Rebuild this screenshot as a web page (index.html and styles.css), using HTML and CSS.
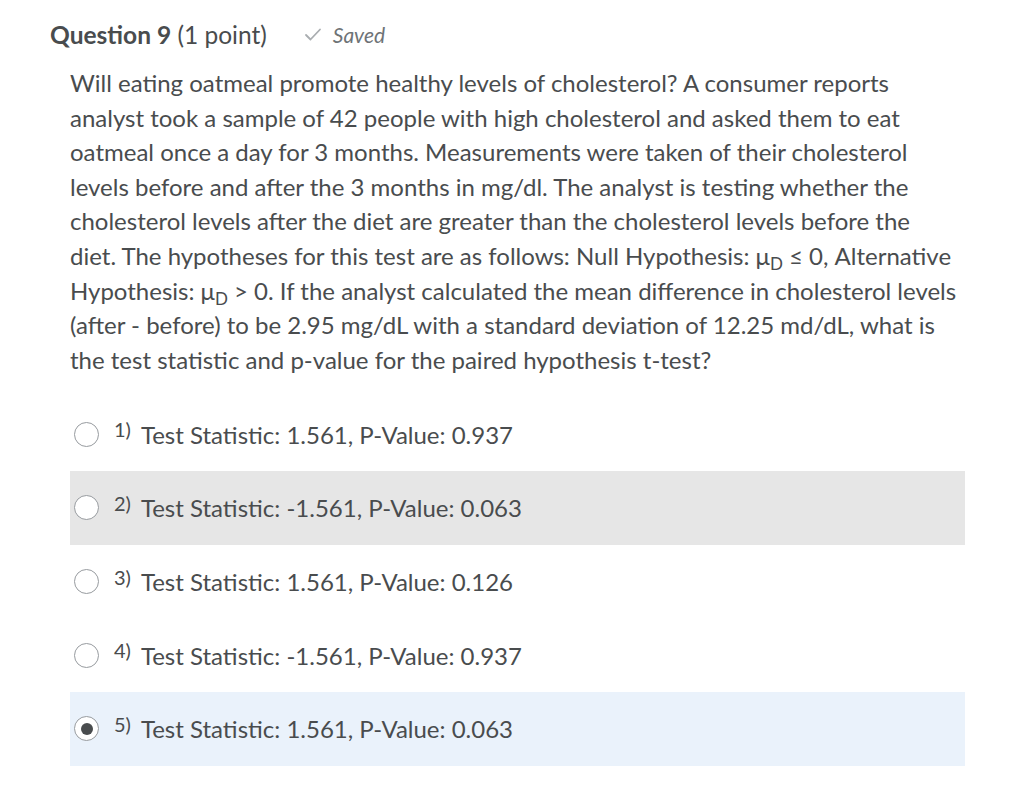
FILE: index.html
```html
<!DOCTYPE html>
<html>
<head>
<meta charset="utf-8">
<link rel="stylesheet" href="styles.css">
</head>
<body>
<div class="page">
  <div class="qhead">
    <span class="qtitle"><b>Question 9</b> (1 point)</span>
    <span class="saved"><svg class="check" width="18" height="15" viewBox="0 0 18 15"><path d="M2 8 L6.5 12.5 L16 2.5" fill="none" stroke="#a9adb0" stroke-width="1.8" stroke-linecap="round" stroke-linejoin="round"/></svg><i>Saved</i></span>
  </div>
  <p class="qtext">Will eating oatmeal promote healthy levels of cholesterol? A consumer reports analyst took a sample of 42 people with high cholesterol and asked them to eat oatmeal once a day for 3 months. Measurements were taken of their cholesterol levels before and after the 3 months in mg/dl. The analyst is testing whether the cholesterol levels after the diet are greater than the cholesterol levels before the diet. The hypotheses for this test are as follows: Null Hypothesis: μ<span class="sub">D</span> ≤ 0, Alternative Hypothesis: μ<span class="sub">D</span> &gt; 0. If the analyst calculated the mean difference in cholesterol levels (after - before) to be 2.95 mg/dL with a standard deviation of 12.25 md/dL, what is the test statistic and p-value for the paired hypothesis t-test?</p>
  <div class="options">
    <div class="opt"><span class="radio"></span><span class="num">1)</span><span class="lbl">Test Statistic: 1.561, P-Value: 0.937</span></div>
    <div class="opt hover"><span class="radio"></span><span class="num">2)</span><span class="lbl">Test Statistic: -1.561, P-Value: 0.063</span></div>
    <div class="opt"><span class="radio"></span><span class="num">3)</span><span class="lbl">Test Statistic: 1.561, P-Value: 0.126</span></div>
    <div class="opt"><span class="radio"></span><span class="num">4)</span><span class="lbl">Test Statistic: -1.561, P-Value: 0.937</span></div>
    <div class="opt selected"><span class="radio checked"></span><span class="num">5)</span><span class="lbl">Test Statistic: 1.561, P-Value: 0.063</span></div>
  </div>
</div>
</body>
</html>
```
FILE: styles.css
```css
html, body { margin: 0; padding: 0; background: #fff; }
body { font-family: Lato, "Open Sans", sans-serif; color: #494c4e; }
.page { padding: 16px 59px 0 50px; }
.qhead { display: flex; align-items: center; height: 36px; }
.qtitle { font-size: 24.5px; color: #494c4e; }
.qtitle b { font-weight: 700; }
.saved { margin-left: 37px; display: flex; align-items: center; gap: 11px; font-size: 21px; color: #6e7376; }
.saved i { font-style: italic; }
.check { margin-top: 1px; }
.qtext { margin: 14px 5px 0 20px; font-size: 24px; line-height: 34.6px; }
.qtext .sub { font-size: 17px; display: inline-block; position: relative; top: 5px; line-height: 1; }
.options { margin: 20px 0 0 20px; }
.opt { height: 73.7px; display: flex; align-items: center; padding-left: 4px; }
.opt.hover { background: #e6e6e6; }
.opt.selected { background: #eaf2fb; }
.radio { width: 25px; height: 25px; border: 1.3px solid #979b9f; border-radius: 50%; background: #fff; box-sizing: border-box; display: flex; align-items: center; justify-content: center; flex: none; }
.radio.checked::after { content: ""; width: 12px; height: 12px; border-radius: 50%; background: #494c4e; }
.num { font-size: 20px; margin-left: 15px; position: relative; top: -5px; }
.lbl { font-size: 24px; margin-left: 10px; }
```
